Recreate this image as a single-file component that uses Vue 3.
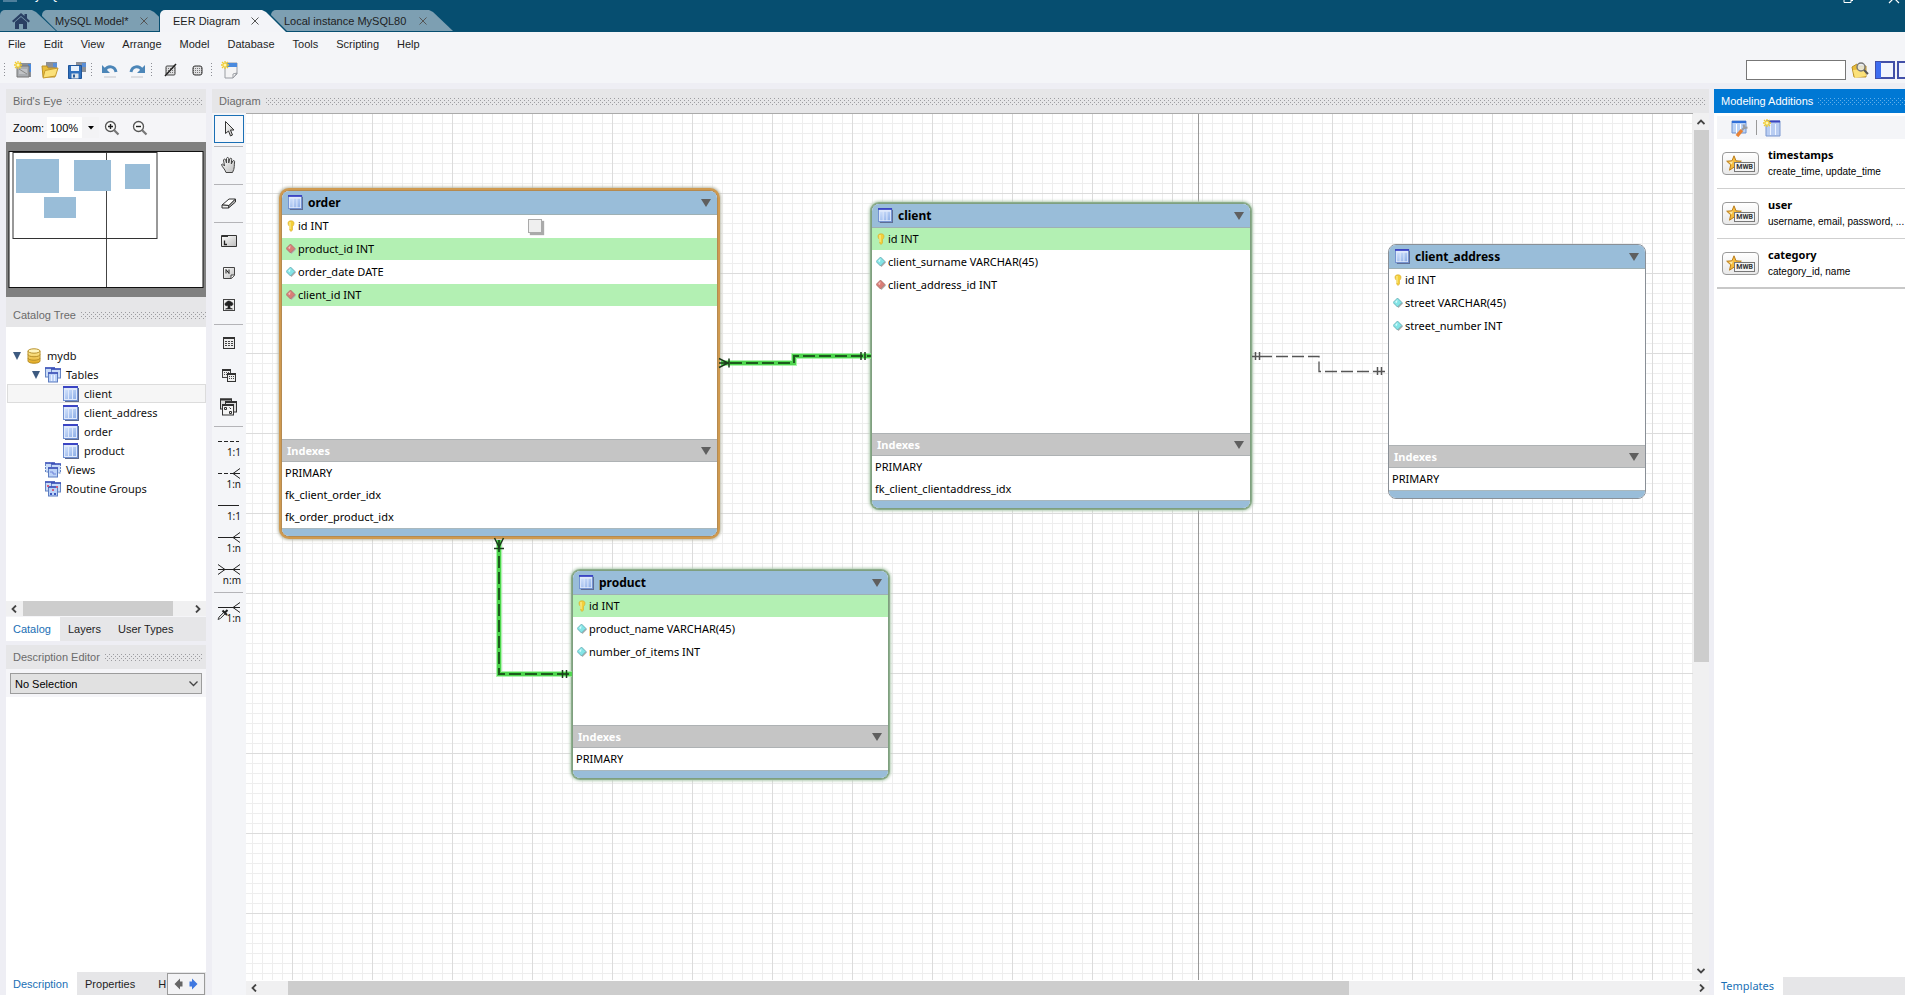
<script setup>
const menus = ['File', 'Edit', 'View', 'Arrange', 'Model', 'Database', 'Tools', 'Scripting', 'Help']

const tabs = [
  { label: 'MySQL Model*', cls: 'model' },
  { label: 'EER Diagram', cls: 'eer active' },
  { label: 'Local instance MySQL80', cls: 'local' },
]

const toolbarGroups = [
  [['new', 'New model'], ['open', 'Open model'], ['save', 'Save model']],
  [['undo', 'Undo'], ['redo', 'Redo']],
  [['nogrid', 'Toggle grid'], ['grid', 'Align to grid']],
  [['newdoc', 'New diagram']],
]

const tree = [
  { label: 'mydb', icon: 'db', level: 0, open: true },
  { label: 'Tables', icon: 'tables', level: 1, open: true },
  { label: 'client', icon: 'table', level: 2, selected: true },
  { label: 'client_address', icon: 'table', level: 2 },
  { label: 'order', icon: 'table', level: 2 },
  { label: 'product', icon: 'table', level: 2 },
  { label: 'Views', icon: 'views', level: 1 },
  { label: 'Routine Groups', icon: 'routines', level: 1 },
]

const tools = [
  [['pointer', 'Select', true]],
  [['hand', 'Pan']],
  [['eraser', 'Delete']],
  [['layer', 'Layer'], ['note', 'Note'], ['image', 'Image']],
  [['grey-table', 'Table'], ['grey-view', 'View'], ['grey-routine', 'Routine group']],
]

const relations = [
  [['rel-d11', '1:1'], ['rel-d1n', '1:n'], ['rel-11', '1:1'], ['rel-1n', '1:n'], ['rel-nm', 'n:m']],
  [['rel-pick', '1:n']],
]

const entities = [
  {
    name: 'order', x: 35, y: 76, w: 437, h: 347, state: 'selected',
    columns: [
      { text: 'id INT', icon: 'key' },
      { text: 'product_id INT', icon: 'fk', hot: true },
      { text: 'order_date DATE', icon: 'col' },
      { text: 'client_id INT', icon: 'fk', hot: true },
    ],
    indexes: ['PRIMARY', 'fk_client_order_idx', 'fk_order_product_idx'],
  },
  {
    name: 'client', x: 625, y: 89, w: 380, h: 306, state: 'related',
    columns: [
      { text: 'id INT', icon: 'key', hot: true },
      { text: 'client_surname VARCHAR(45)', icon: 'col' },
      { text: 'client_address_id INT', icon: 'fk' },
    ],
    indexes: ['PRIMARY', 'fk_client_clientaddress_idx'],
  },
  {
    name: 'client_address', x: 1142, y: 130, w: 258, h: 255, state: 'plain',
    columns: [
      { text: 'id INT', icon: 'key' },
      { text: 'street VARCHAR(45)', icon: 'col' },
      { text: 'street_number INT', icon: 'col' },
    ],
    indexes: ['PRIMARY'],
  },
  {
    name: 'product', x: 326, y: 456, w: 317, h: 209, state: 'related',
    columns: [
      { text: 'id INT', icon: 'key', hot: true },
      { text: 'product_name VARCHAR(45)', icon: 'col' },
      { text: 'number_of_items INT', icon: 'col' },
    ],
    indexes: ['PRIMARY'],
  },
]

const place = (e) => ({ left: e.x + 'px', top: e.y + 'px', width: e.w + 'px', height: e.h + 'px' })

const templates = [
  { name: 'timestamps', fields: 'create_time, update_time' },
  { name: 'user', fields: 'username, email, password, ...' },
  { name: 'category', fields: 'category_id, name' },
]
</script>

<template>
  <div class="app">
    <svg class="defs" aria-hidden="true">
      <defs>
        <linearGradient id="gTable" x1="0" y1="0" x2="1" y2="1">
          <stop offset="0" stop-color="#cfe0fb" /><stop offset="1" stop-color="#8fb0e8" />
        </linearGradient>
        <linearGradient id="gGold" x1="0" y1="0" x2="0" y2="1">
          <stop offset="0" stop-color="#fff0a0" /><stop offset="1" stop-color="#e3a81e" />
        </linearGradient>
        <linearGradient id="gGrey" x1="0" y1="0" x2="1" y2="1">
          <stop offset="0" stop-color="#fff" /><stop offset="1" stop-color="#bdbdbd" />
        </linearGradient>
      </defs>
      <symbol id="table" viewBox="0 0 16 16">
        <rect x="2" y="2" width="14" height="14" fill="#5d6b90" />
        <rect x="0.5" y="0.5" width="14" height="14" fill="#dfe9fb" stroke="#6f8fd0" />
        <rect x="0" y="0" width="15" height="2" fill="#3b45c4" />
        <path d="M2 4h3v9H2zM6 4h3v9H6zM10 4h3v9h-3z" fill="url(#gTable)" />
      </symbol>
      <symbol id="db" viewBox="0 0 16 16">
        <path d="M2 3v10c0 3 12 3 12 0V3z" fill="url(#gGold)" stroke="#b8902a" />
        <ellipse cx="8" cy="3" rx="6" ry="2.2" fill="#fff6c0" stroke="#b8902a" />
        <path d="M2 6.500c0 3 12 3 12 0M2 10c0 3 12 3 12 0" fill="none" stroke="#b8902a" />
      </symbol>
      <symbol id="tables" viewBox="0 0 16 16">
        <rect x="0.500" y="1" width="9" height="9" fill="#c9dbf8" stroke="#6484c4" />
        <rect x="6.500" y="2" width="9" height="9" fill="#c9dbf8" stroke="#6484c4" />
        <rect x="3.500" y="6" width="9" height="9" fill="#bcd2f7" stroke="#5c7cc0" />
        <path d="M0 1h10M6 2h10M3 6h10" stroke="#3b4fb8" stroke-width="1.500" />
        <path d="M6.500 8v6M9.500 8v6" stroke="#eaf2ff" />
      </symbol>
      <symbol id="views" viewBox="0 0 16 16">
        <rect x="0.500" y="1" width="9" height="9" fill="#c9dbf8" stroke="#6484c4" stroke-dasharray="2 1" />
        <rect x="6.500" y="2" width="9" height="9" fill="#c9dbf8" stroke="#6484c4" stroke-dasharray="2 1" />
        <rect x="3.500" y="6" width="9" height="9" fill="#bcd2f7" stroke="#5c7cc0" />
        <path d="M0 1h10M6 2h10M3 6h10" stroke="#3b4fb8" stroke-width="1.500" />
        <path d="M5 10h3v2h3" stroke="#6f83d8" fill="none" />
      </symbol>
      <symbol id="routines" viewBox="0 0 16 16">
        <rect x="0.500" y="1" width="9" height="9" fill="#c9dbf8" stroke="#6484c4" />
        <rect x="6.500" y="2" width="9" height="9" fill="#c9dbf8" stroke="#6484c4" />
        <rect x="3.500" y="6" width="9" height="9" fill="#bcd2f7" stroke="#5c7cc0" />
        <path d="M0 1h10M6 2h10M3 6h10" stroke="#3b4fb8" stroke-width="1.500" />
        <path d="M2 4h2v2H2zM11 5h2v2h-2zM7 8h2v2H7z" fill="#d06080" />
        <path d="M5 12h2v2H5zM9 12h2v2H9z" fill="#3a58c0" />
      </symbol>
      <symbol id="key" viewBox="0 0 10 12">
        <path d="M2 3c0-3 6-3 6 0 0 2-1 3-1.500 3.500V10L5 11.500 3.700 10V6.500C3 6 2 5 2 3z" fill="#f3cf3a" stroke="#d9a92a" stroke-width="0.600" />
        <path d="M4 2v7" stroke="#fff3a0" />
      </symbol>
      <symbol id="fk" viewBox="0 0 10 12">
        <path d="M5.500 2L10 6.500 5.500 11 1 6.500z" fill="#b0b0b0" />
        <path d="M4.500 1L9 5.500 4.500 10 0 5.500z" fill="#d97d77" stroke="#a8706c" stroke-width="0.700" />
        <path d="M4.500 2.500L2 5l2 1z" fill="#f6c4c0" />
      </symbol>
      <symbol id="col" viewBox="0 0 10 12">
        <path d="M5.500 2L10 6.500 5.500 11 1 6.500z" fill="#b0b0b0" />
        <path d="M4.500 1L9 5.500 4.500 10 0 5.500z" fill="#84e4e6" stroke="#5fa4ac" stroke-width="0.700" />
        <path d="M4.500 2.500L2 5l2 1z" fill="#d4fbfb" />
      </symbol>

      <symbol id="new" viewBox="0 0 18 18">
        <path d="M6 2h11v14H6z" fill="#8b8f96" /><path d="M14 3h3v8h-3z" fill="#4a8ade" />
        <path d="M3 5h12v11H3z" fill="#a9acb0" stroke="#777" /><path d="M5 8h8v5H5z" fill="#c0c2c5" /><path d="M5 8l8 5" stroke="#888" />
        <path d="M4 0v8M0 4h8M1 1l6 6M7 1L1 7" stroke="#f2cc2e" stroke-width="1.300" /><circle cx="4" cy="4" r="1.500" fill="#fff6b0" />
      </symbol>
      <symbol id="open" viewBox="0 0 18 18">
        <path d="M5 1h11v9H5z" fill="#8c9097" /><path d="M12 2h4v4h-4z" fill="#5b8fd6" />
        <path d="M1 5h5l1 2h7v9H2z" fill="#e9bd3a" stroke="#b8902a" /><path d="M4 9.500L17 7l-2.500 8L2 17z" fill="#fbe17a" stroke="#c79a2c" />
      </symbol>
      <symbol id="save" viewBox="0 0 18 18">
        <path d="M8 1h10v10H8z" fill="#8c9097" /><path d="M14 2h4v4h-4z" fill="#5b8fd6" />
        <path d="M0.500 4.500h13v13h-13z" fill="#2f70bd" stroke="#1f559a" /><path d="M3 5h8v5H3z" fill="#e8f1fb" /><path d="M3.500 12.500h7v5h-7z" fill="#dfe5ea" /><path d="M5 13.500h2v3H5z" fill="#2b5c97" />
      </symbol>
      <symbol id="undo" viewBox="0 0 18 18">
        <path d="M4 9c3-5 10-4 11 2" fill="none" stroke="#4c86b8" stroke-width="3" /><path d="M1 4v8h8z" fill="#4c86b8" />
        <path d="M3 16h12" stroke="#dcdde1" stroke-width="2" />
      </symbol>
      <symbol id="redo" viewBox="0 0 18 18">
        <path d="M14 9c-3-5-10-4-11 2" fill="none" stroke="#4c86b8" stroke-width="3" /><path d="M17 4v8H9z" fill="#4c86b8" />
        <path d="M3 16h12" stroke="#dcdde1" stroke-width="2" />
      </symbol>
      <symbol id="grid" viewBox="0 0 18 18">
        <rect x="5" y="5" width="9" height="9" rx="2" fill="#e0e0e2" stroke="#333" />
        <path d="M5 7.500h9M5 9.500h9M5 11.500h9" stroke="#555" stroke-dasharray="1 1" />
        <path d="M7.500 5v9M9.500 5v9M11.500 5v9" stroke="#777" stroke-dasharray="1 1" />
      </symbol>
      <symbol id="nogrid" viewBox="0 0 18 18">
        <rect x="5" y="5" width="9" height="9" rx="1" fill="#e0e0e2" stroke="#444" />
        <path d="M5 7.500h9M5 9.500h9M5 11.500h9" stroke="#777" stroke-dasharray="1 1" />
        <path d="M4 15L15 3" stroke="#222" stroke-width="1.500" />
      </symbol>
      <symbol id="newdoc" viewBox="0 0 18 18">
        <path d="M4 2h12v11l-4 4H4z" fill="#f4f4f5" stroke="#9a9da3" /><path d="M5 2h11v4H5z" fill="#4a8ade" /><path d="M16 12l-4 1v4z" fill="#fff" stroke="#9a9da3" />
        <path d="M4 0v8M0 4h8M1 1l6 6M7 1L1 7" stroke="#f2cc2e" stroke-width="1.300" /><circle cx="4" cy="4" r="1.500" fill="#fff6b0" />
      </symbol>
      <symbol id="search" viewBox="0 0 18 18">
        <path d="M1 6l5-3 2 2h7v11H3z" fill="#e9bd3a" stroke="#b8902a" /><path d="M2 9l12-1 1 7-11 2z" fill="#fbe17a" />
        <circle cx="10" cy="6" r="4" fill="#e8edf0" fill-opacity="0.800" stroke="#777" stroke-width="1.400" /><path d="M13 9l4 4" stroke="#555" stroke-width="2" />
      </symbol>
      <symbol id="pane" viewBox="0 0 20 18">
        <rect x="1" y="1" width="18" height="16" fill="#f2f5fd" stroke="#4250a8" stroke-width="2" /><path d="M1 1h5v16H1z" fill="#3f6ef0" />
      </symbol>
      <symbol id="mag-plus" viewBox="0 0 16 16">
        <circle cx="6.500" cy="6.500" r="5" fill="#fafafa" stroke="#555" stroke-width="1.300" /><path d="M10 10l4.500 4.500" stroke="#777" stroke-width="2.200" /><path d="M4 6.500h5M6.500 4v5" stroke="#222" stroke-width="1.400" />
      </symbol>
      <symbol id="mag-minus" viewBox="0 0 16 16">
        <circle cx="6.500" cy="6.500" r="5" fill="#fafafa" stroke="#555" stroke-width="1.300" /><path d="M10 10l4.500 4.500" stroke="#777" stroke-width="2.200" /><path d="M4 6.500h5" stroke="#222" stroke-width="1.400" />
      </symbol>

      <symbol id="pointer" viewBox="0 0 18 18">
        <path d="M5.500 1.500v12l3-2.500 2 5 2-1-2-5h3.500z" fill="url(#gGrey)" stroke="#333" />
      </symbol>
      <symbol id="hand" viewBox="0 0 18 18">
        <path d="M6 16.500C5 13 2 11 1.500 8.500c1-1 2 0 3 1.500L3.500 4c.5-1.500 2-1 2.200 0L6.500 7V2.500c.4-1.500 2-1.300 2.200 0V7l1-4c.5-1.300 2-1 2 .3L11.300 8l1.500-3c.8-1 2-.4 1.800.8C14 9 15 12 12.500 16.500z" fill="url(#gGrey)" stroke="#444" />
      </symbol>
      <symbol id="eraser" viewBox="0 0 18 18">
        <path d="M2 11l7-6h6.500L9 11.500z" fill="#fff" stroke="#333" /><path d="M2 11v3h6.500L9 11.500z" fill="#eee" stroke="#333" /><path d="M8.500 14l7-6V5L9 11.500z" fill="#bbb" stroke="#333" />
      </symbol>
      <symbol id="layer" viewBox="0 0 18 18">
        <path d="M1.500 3.500h15v11h-15z" fill="url(#gGrey)" stroke="#333" /><path d="M2 4.500h6" stroke="#333" /><path d="M4.500 8.500v4H7" fill="none" stroke="#222" stroke-width="1.300" />
      </symbol>
      <symbol id="note" viewBox="0 0 18 18">
        <path d="M3.500 3.500h11v8l-3 3h-8z" fill="url(#gGrey)" stroke="#444" /><path d="M14.500 11h-3.500v3.500" fill="#fff" stroke="#444" /><path d="M6 9.500v-4l3 4v-4" fill="none" stroke="#222" />
      </symbol>
      <symbol id="image" viewBox="0 0 18 18">
        <rect x="3.500" y="3.500" width="11" height="11" fill="#eee" stroke="#444" /><path d="M9 5c1.500 0 2 1 2 1 2 0 2.500 3 1 3.500-1 .4-2 0-2 0v2.500l2.500 1h-7l2.500-1V9.500s-2.500 1-3-.8C4.700 7 6.500 6 7 6c0-.5.800-1 2-1z" fill="#222" stroke="#222" stroke-width="0.600" />
      </symbol>
      <symbol id="grey-table" viewBox="0 0 18 18">
        <rect x="3.500" y="3.500" width="11" height="11" fill="#eee" stroke="#333" /><path d="M3 4h12" stroke="#333" stroke-width="2" /><path d="M5 7.500h8M5 9.500h8M5 11.500h8" stroke="#444" stroke-dasharray="2 1" />
      </symbol>
      <symbol id="grey-view" viewBox="0 0 18 18">
        <rect x="2.500" y="3.500" width="8" height="8" fill="#eee" stroke="#444" /><path d="M4 6.500h6M4 8.500h6" stroke="#555" stroke-dasharray="1 1" />
        <rect x="7.500" y="7.500" width="8" height="8" fill="#eee" stroke="#333" /><path d="M7 8h9M2 4h9" stroke="#333" stroke-width="2" /><path d="M9 10.500h6M9 12.500h6" stroke="#444" stroke-dasharray="1 1" />
      </symbol>
      <symbol id="grey-routine" viewBox="0 0 18 18">
        <rect x="0.500" y="1" width="11" height="10" fill="#ddd" stroke="#333" /><path d="M0 1.500h12" stroke="#333" stroke-width="2" />
        <rect x="5.500" y="4" width="11" height="10" fill="#ddd" stroke="#333" /><path d="M5 4h12" stroke="#333" stroke-width="2" />
        <rect x="2.500" y="7" width="11" height="10" fill="#f4f4f4" stroke="#333" /><path d="M2 7h12" stroke="#333" stroke-width="2" />
        <path d="M4.500 9.500h2v2h-2zM9.500 9.500l1.500 1.500M9.500 13.500h2v2h-2z" fill="none" stroke="#333" />
      </symbol>
      <symbol id="rel-d11" viewBox="0 0 24 12"><path d="M1 6.500h21" stroke="#222" stroke-dasharray="4 2" /></symbol>
      <symbol id="rel-11" viewBox="0 0 24 12"><path d="M1 6.500h21" stroke="#222" /></symbol>
      <symbol id="rel-d1n" viewBox="0 0 24 12"><path d="M1 6.500h16" stroke="#222" stroke-dasharray="4 2" /><path d="M23 1.500l-7 5 7 5M16 6.500h7" fill="none" stroke="#222" /></symbol>
      <symbol id="rel-1n" viewBox="0 0 24 12"><path d="M1 6.500h22M23 1.500l-7 5 7 5" fill="none" stroke="#222" /></symbol>
      <symbol id="rel-nm" viewBox="0 0 24 12"><path d="M1 6.500h22M23 1.500l-7 5 7 5M1 1.500l7 5-7 5" fill="none" stroke="#222" /></symbol>
      <symbol id="rel-pick" viewBox="0 0 24 24">
        <path d="M1 6.500h22M23 1.500l-7 5 7 5" fill="none" stroke="#222" /><path d="M1 18.500l1-2.500 5-5 1.500 1.500-5 5z" fill="#ddd" stroke="#444" /><path d="M5.500 9.500l4.500 4.500M7.500 12L10.500 9" stroke="#222" stroke-width="2" />
      </symbol>
      <symbol id="tbl-edit" viewBox="0 0 18 18">
        <path d="M1 2h14v12H1z" fill="#b9d2f6" stroke="#6f93cf" /><path d="M1 2h14v2H1z" fill="#2f6fd8" /><path d="M5.500 5v9M9.500 5v9" stroke="#fff" />
        <path d="M6 17l5-6" stroke="#ea8233" stroke-width="3.500" /><path d="M11 11l3-3M12.500 5.500l1 3.500 3-.5" stroke="#9a9da3" stroke-width="2.200" fill="none" />
      </symbol>
      <symbol id="tbl-new" viewBox="0 0 18 18">
        <path d="M3 2h14v15H3z" fill="#b9cdf2" stroke="#7b97cf" /><path d="M3 1.500h14v2H3z" fill="#3944c0" /><path d="M7.500 5v11M12.500 5v11" stroke="#eef4ff" />
        <path d="M4 0v8M0 4h8M1 1l6 6M7 1L1 7" stroke="#f2cc2e" stroke-width="1.300" /><circle cx="4" cy="4" r="1.500" fill="#fff6b0" />
      </symbol>
      <symbol id="star" viewBox="0 0 16 16">
        <path d="M8 0.800l2 5 5.300.4-4 3.600 1.200 5.400L8 12.200l-4.500 3 1.200-5.400-4-3.600L6 5.800z" fill="#f7bd3e" stroke="#b97d1c" /><path d="M8 2.500l-1.500 4L3 7l2.800 2.500z" fill="#fde9a8" />
      </symbol>
    </svg>

    <header class="titlebar">
      <div class="title-row">
        <span class="app-icon"></span>
        <span class="app-title">MySQL Workbench</span>
        <svg class="win-ctl" width="62" height="4" viewBox="0 0 62 4" aria-hidden="true">
          <path d="M1 0v2.500h7V0M8 0.500h2" fill="none" stroke="#fff" />
          <path d="M46 3l5-5 5 5" fill="none" stroke="#fff" stroke-width="1.200" />
        </svg>
      </div>
      <nav class="tabs" aria-label="Documents">
        <button class="tab home" aria-label="Home">
          <svg width="18" height="16" viewBox="0 0 18 16"><path d="M9 0L0 8l1.500 1.500L9 3l7.500 6.500L18 8l-3-2.700V1h-2.500v2z" fill="#2a3f63" /><path d="M3 9l6-5 6 5v7h-4v-5H7v5H3z" fill="#2a3f63" /></svg>
        </button>
        <button v-for="t in tabs" :key="t.label" class="tab" :class="t.cls">
          <span>{{ t.label }}</span>
          <svg width="8" height="8" viewBox="0 0 8 8" aria-hidden="true"><path d="M.5.5l7 7M7.500.5l-7 7" stroke="#555" /></svg>
        </button>
      </nav>
    </header>

    <nav class="menubar" aria-label="Main menu">
      <button v-for="m in menus" :key="m">{{ m }}</button>
    </nav>

    <div class="toolbar">
      <template v-for="(g, i) in toolbarGroups" :key="i">
        <i class="grip"></i>
        <button v-for="b in g" :key="b[0]" class="tb" :aria-label="b[1]"><svg width="18" height="18"><use :href="'#' + b[0]" /></svg></button>
      </template>
      <input class="search" type="text" aria-label="Search" />
      <button class="find" aria-label="Find"><svg width="18" height="18"><use href="#search" /></svg></button>
      <button class="pane" aria-label="Left pane"><svg width="20" height="18"><use href="#pane" /></svg></button>
      <button class="pane cut" aria-label="Bottom pane"><svg width="20" height="18" viewBox="0 0 20 18"><rect x="1" y="1" width="18" height="16" fill="#f2f5fd" stroke="#4250a8" stroke-width="2" /></svg></button>
    </div>

    <main class="work">
      <aside class="left">
        <h2 class="ph">Bird's Eye<i></i></h2>
        <div class="zoom">
          <label for="zoom">Zoom:</label>
          <span class="zoombox"><input id="zoom" type="text" value="100%" /><button aria-label="Zoom levels"><svg width="6" height="4" viewBox="0 0 6 4"><path d="M0 0h6L3 3.500z" fill="#000" /></svg></button></span>
          <button aria-label="Zoom in"><svg width="16" height="16"><use href="#mag-plus" /></svg></button>
          <button aria-label="Zoom out"><svg width="16" height="16"><use href="#mag-minus" /></svg></button>
        </div>
        <svg class="bird" viewBox="0 0 200 155" preserveAspectRatio="none" role="img" aria-label="Diagram overview">
          <rect x="0" y="0" width="200" height="155" fill="#808080" />
          <rect x="3" y="9.500" width="194" height="136" fill="#fff" stroke="#111" />
          <path d="M100.500 10v135" stroke="#444" />
          <g fill="#99bdd8"><rect x="10" y="17" width="43" height="34" /><rect x="68" y="18" width="37" height="31" /><rect x="119" y="22" width="25" height="25" /><rect x="38" y="55" width="32" height="21" /></g>
          <rect x="7" y="10.500" width="144" height="86" fill="none" stroke="#333" />
        </svg>
        <h2 class="ph tall">Catalog Tree<i></i></h2>
        <ul class="tree">
          <li v-for="n in tree" :key="n.label" :class="['lv' + n.level, { sel: n.selected }]">
            <svg v-if="n.level < 2" class="twist" width="8" height="8" viewBox="0 0 8 8"><path v-if="n.open" d="M0 0h8L4 8z" fill="#3d5a80" /></svg>
            <svg width="16" height="16"><use :href="'#' + n.icon" /></svg>
            <span>{{ n.label }}</span>
          </li>
        </ul>
        <div class="hscroll small">
          <svg width="6" height="8" viewBox="0 0 6 8"><path d="M5 .5L1.500 4 5 7.500" fill="none" stroke="#444" stroke-width="1.800" /></svg>
          <b></b>
          <svg width="6" height="8" viewBox="0 0 6 8"><path d="M1 .5L4.500 4 1 7.500" fill="none" stroke="#444" stroke-width="1.800" /></svg>
        </div>
        <div class="ptabs"><button class="on">Catalog</button><button>Layers</button><button>User Types</button></div>
        <h2 class="ph gap">Description Editor<i></i></h2>
        <div class="selrow">
          <select aria-label="Object"><option>No Selection</option></select>
          <svg width="9" height="6" viewBox="0 0 9 6" aria-hidden="true"><path d="M.5.5l4 4 4-4" fill="none" stroke="#444" stroke-width="1.300" /></svg>
        </div>
        <div class="desc"></div>
        <div class="ptabs bottom">
          <button class="on">Description</button><button>Properties</button><button class="hist" aria-label="History">H</button>
          <span class="nav">
            <button aria-label="Previous"><svg width="9" height="12" viewBox="0 0 9 12"><path d="M6 .5L.5 6 6 11.500V8.500h2.500v-5H6z" fill="#666" /></svg></button>
            <button aria-label="Next"><svg width="9" height="12" viewBox="0 0 9 12"><path d="M3 .5L8.500 6 3 11.500V8.500H.5v-5H3z" fill="#3f78e0" /></svg></button>
          </span>
        </div>
      </aside>

      <section class="center">
        <h2 class="ph">Diagram<i></i></h2>
        <div class="stage">
          <div class="palette">
            <template v-for="(g, i) in tools" :key="i">
              <button v-for="t in g" :key="t[0]" class="tool" :class="{ on: t[2] }" :aria-label="t[1]"><svg width="18" height="18"><use :href="'#' + t[0]" /></svg></button>
              <hr />
            </template>
            <template v-for="(g, i) in relations" :key="'r' + i">
              <button v-for="t in g" :key="t[0]" class="tool rel" :class="{ pick: t[0] === 'rel-pick' }"><svg width="24" :height="t[0] === 'rel-pick' ? 24 : 12"><use :href="'#' + t[0]" /></svg><span>{{ t[1] }}</span></button>
              <hr v-if="i === 0" />
            </template>
          </div>

          <div class="canvas">
            <div class="pageline"></div>
            <article v-for="e in entities" :key="e.name" class="entity" :class="e.state" :style="place(e)">
              <h3><svg width="15" height="15"><use href="#table" /></svg>{{ e.name }}<i class="tri"></i></h3>
              <ul class="cols">
                <li v-for="c in e.columns" :key="c.text" :class="{ hot: c.hot }"><svg width="10" height="12"><use :href="'#' + c.icon" /></svg>{{ c.text }}</li>
              </ul>
              <h4>Indexes<i class="tri"></i></h4>
              <ul class="idx"><li v-for="x in e.indexes" :key="x">{{ x }}</li></ul>
              <footer></footer>
            </article>
            <svg class="links" width="1447" height="865" aria-hidden="true">
              <g fill="none" stroke="#8df08d" stroke-width="6" opacity="0.700"><path d="M475 249H548V242H625" /><path d="M253 426V560H326" /></g>
              <g fill="none" stroke="#4fd64f" stroke-width="4"><path d="M475 249H548V242H625" /><path d="M253 426V560H326" /></g>
              <g fill="none" stroke="#1d5c1d" stroke-width="2"><path d="M484 249H548V242H625M253 426V560H326" stroke-dasharray="12 4" /></g>
              <g fill="none" stroke="#1d3c1d" stroke-width="1.500">
                <path d="M473 244.500l9 4.500-9 4.500M483 244.500v9M473 249h10" />
                <path d="M615 238v8M619 238v8" />
                <path d="M248.500 424l4.500 9 4.500-9M248 434.500h10" />
                <path d="M316.500 556v8M320.500 556v8" />
              </g>
              <g fill="none" stroke="#555">
                <path d="M1006 242.500h20M1009.500 238v8M1013.500 238v8M1127 257.500h12M1131.500 253v8M1135.500 253v8" stroke-width="1.500" />
                <path d="M1030 242.500H1073V257.500H1127" stroke-dasharray="12 4" stroke-width="1.300" />
              </g>
            </svg>
            <div class="ghost"></div>
          </div>

          <div class="vscroll">
            <svg width="8" height="6" viewBox="0 0 8 6"><path d="M.5 5L4 1.500 7.500 5" fill="none" stroke="#444" stroke-width="1.800" /></svg>
            <b></b>
            <svg width="8" height="6" viewBox="0 0 8 6"><path d="M.5 1L4 4.500 7.500 1" fill="none" stroke="#444" stroke-width="1.800" /></svg>
          </div>
          <div class="hscroll wide">
            <svg width="6" height="8" viewBox="0 0 6 8"><path d="M5 .5L1.500 4 5 7.500" fill="none" stroke="#444" stroke-width="1.800" /></svg>
            <b></b>
            <svg width="6" height="8" viewBox="0 0 6 8"><path d="M1 .5L4.500 4 1 7.500" fill="none" stroke="#444" stroke-width="1.800" /></svg>
          </div>
        </div>
      </section>

      <aside class="right">
        <h2 class="ph blue">Modeling Additions<i></i></h2>
        <div class="addbar">
          <button aria-label="Edit template"><svg width="18" height="18"><use href="#tbl-edit" /></svg></button>
          <i></i>
          <button aria-label="New table from template"><svg width="18" height="18"><use href="#tbl-new" /></svg></button>
        </div>
        <ul class="templates">
          <li v-for="t in templates" :key="t.name">
            <span class="badge"><svg width="16" height="16"><use href="#star" /></svg><b>MWB</b></span>
            <div><strong>{{ t.name }}</strong><small>{{ t.fields }}</small></div>
          </li>
        </ul>
        <div class="ptabs rt"><button class="on">Templates</button></div>
      </aside>
    </main>
  </div>
</template>

<style>
html, body { margin: 0; background: #eeeef4; }
</style>

<style scoped>
.app { height: 100vh; display: flex; flex-direction: column; overflow: hidden; font: 11px/14px "Liberation Sans", Arial, sans-serif; color: #1e1e1e; background: #eeeef4; }
.app * { box-sizing: border-box; }
.defs { position: absolute; width: 0; height: 0; }
button { border: 0; padding: 0; margin: 0; background: none; font: inherit; color: inherit; }
input, select { font: inherit; color: inherit; margin: 0; border-radius: 0; }
h2, h3, h4, ul { margin: 0; padding: 0; list-style: none; font-weight: normal; }
svg { display: block; flex: none; }

.titlebar { background: #064e70; height: 32px; flex: none; overflow: hidden; }
.title-row { height: 2px; display: flex; align-items: flex-end; gap: 8px; padding-left: 3px; color: #fff; }
.app-icon { width: 14px; height: 2px; background: #4e7f9c; }
.app-title { font-size: 12px; line-height: 14px; }
.win-ctl { margin-left: auto; align-self: flex-start; }
.tabs { display: flex; margin-top: 8px; height: 22px; }
.tab { position: relative; z-index: 1; display: flex; align-items: center; height: 22px; padding: 0 0 0 13px; text-align: left; white-space: nowrap; }
.tab::before, .tab::after { content: ""; position: absolute; inset: 0; z-index: -1; border-radius: 5px 0 0 0; clip-path: polygon(0 0, calc(100% - 24px) 0, calc(100% - 20px) 2px, 100% 100%, 0 100%); }
.tab::before { right: -2px; left: -1px; background: #064e70; }
.tab::after { bottom: 1px; background: #7d9fb2; }
.tab span { flex: 1; }
.tab.home { width: 56px; z-index: 3; padding-left: 12px; }
.tab.model { width: 132px; margin-left: -14px; }
.tab.model svg { margin-right: 26px; }
.tab.eer { width: 126px; margin-left: -14px; z-index: 5; }
.tab.eer svg { margin-right: 27px; }
.tab.local { width: 182px; margin-left: -15px; z-index: 2; }
.tab.local svg { margin-right: 26px; }
.tab.active::after { background: #f3f4f8; bottom: 0; }

.menubar { display: flex; gap: 18px; padding: 0 8px; height: 24px; align-items: center; background: #f4f5f8; flex: none; }
.toolbar { display: flex; align-items: center; height: 27px; padding-left: 3px; background: #f4f5f8; flex: none; overflow: hidden; }
.grip { width: 6px; height: 13px; flex: none; background: repeating-linear-gradient(#8d8f96 0 1px, transparent 1px 3px) 1px 0 / 1px 100% no-repeat; }
.tb { width: 27px; display: flex; justify-content: center; }
.search { margin-left: auto; width: 100px; height: 20px; border: 1px solid #777; background: #fff; padding: 0 3px; }
.find { margin: 0 6px 0 5px; }
.pane { margin-right: 2px; }
.pane.cut { width: 8px; overflow: hidden; margin: 0; }

.work { flex: 1; min-height: 0; display: grid; grid-template-columns: 200px minmax(0, 1fr) 191px; grid-template-rows: minmax(0, 1fr); padding: 6px 0 0 6px; }
.left { display: flex; flex-direction: column; background: #f5f5f8; min-height: 0; }
.center { display: flex; flex-direction: column; margin: 0 5px 0 6px; min-width: 0; min-height: 0; }
.right { display: flex; flex-direction: column; background: #fff; min-width: 0; min-height: 0; }

.ph { --dot: #9c9ca0; display: flex; align-items: center; height: 24px; padding: 0 4px 0 7px; font-size: 11px; color: #6b6b6b; background: #e6e6e8; flex: none; white-space: nowrap; }
.ph i { flex: 1; height: 7px; margin-left: 5px; background-image: conic-gradient(at 1px 1px, transparent 75%, var(--dot) 0), conic-gradient(at 1px 1px, transparent 75%, var(--dot) 0); background-size: 4px 4px; background-position: 0 0, 2px 2px; }
.ph.tall { height: 30px; padding-top: 6px; padding-right: 0; }
.ph.gap { border-top: 4px solid #eeeef4; height: 28px; }
.ph.blue { --dot: #62aee8; background: #0078d4; color: #fff; padding-right: 0; }

.zoom { display: flex; align-items: center; height: 29px; padding-left: 7px; flex: none; color: #000; }
.zoom label { width: 34px; }
.zoombox { display: flex; width: 52px; height: 21px; background: #fff; margin-right: 5px; }
.zoombox input { width: 35px; border: 0; padding: 0 0 0 3px; background: #fff; }
.zoombox button { flex: 1; background: #f3f3f5; display: flex; align-items: center; justify-content: center; }
.zoom > button { width: 28px; }
.bird { height: 155px; width: 100%; background: #808080; flex: none; }

.tree { flex: none; height: 274px; padding: 19px 0 0 1px; background: #fff; font: 11px/17px "Noto Sans", sans-serif; color: #111; }
.tree li { display: flex; align-items: center; height: 19px; gap: 5px; padding-left: 5px; border: 1px solid transparent; }
.tree .lv1 { padding-left: 24px; }
.tree .lv2 { padding-left: 55px; }
.tree .sel { background: #f6f6f6; border-color: #dcdcdc; }

.hscroll { display: flex; align-items: center; background: #f0f0f1; flex: none; }
.hscroll.small { height: 15px; padding: 0 5px; justify-content: space-between; }
.hscroll.small b { height: 15px; width: 150px; margin-right: auto; margin-left: 6px; background: #cdcdcd; }

.ptabs { display: flex; height: 24px; background: #e6e6e8; flex: none; margin-top: 1px; white-space: nowrap; }
.ptabs button { padding: 0 9px 0 8px; }
.ptabs button.on { background: #fff; color: #1a6fb5; }
.left .ptabs button:first-child { padding-left: 7px; }
.ptabs.bottom { position: relative; height: 23px; overflow: hidden; margin: 0; }
.ptabs.bottom button { padding: 0 9px 0 8px; }
.ptabs.bottom .hist { padding: 0 0 0 14px; }
.ptabs .nav { position: absolute; right: 1px; top: 1px; width: 38px; height: 22px; border: 1px solid #9a9a9a; background: #f3f3f5; display: flex; align-items: center; justify-content: space-evenly; }
.ptabs.bottom .nav button { padding: 0; }

.selrow { position: relative; padding: 4px; height: 28px; flex: none; }
.selrow select { width: 100%; height: 21px; appearance: none; border: 1px solid #9c9c9c; background: #e1e1e1; padding: 0 4px; color: #000; }
.selrow svg { position: absolute; right: 8px; top: 12px; }
.desc { flex: 1; background: #fff; }

.stage { flex: 1; min-height: 0; display: grid; grid-template-columns: 34px minmax(0, 1fr) 16px; grid-template-rows: minmax(0, 1fr) 15px; background: #f4f5f8; }
.palette { grid-row: 1 / 3; padding: 0 3px 0 2px; min-height: 0; overflow: hidden; }
.tool { display: flex; align-items: center; justify-content: center; width: 30px; height: 32px; }
.tool.on { height: 28px; margin: 2px 0 3px; border: 1px solid #1a6fb5; background: #f7f8fb; }
.palette hr { border: 0; height: 1px; margin: 3px 0 2px; background: #b4b4b8; }
.tool.rel { flex-direction: column; justify-content: flex-start; align-items: flex-end; padding: 6px 3px 0 0; font: 10px/10px "Noto Sans", sans-serif; color: #111; }
.tool.pick svg { margin-bottom: -12px; }

.canvas { position: relative; overflow: hidden; border-top: 1px solid #aaa; background-color: #fff;
  background-image: linear-gradient(90deg, #dcdcdc 1px, transparent 1px), linear-gradient(#dcdcdc 1px, transparent 1px), linear-gradient(90deg, #eee 1px, transparent 1px), linear-gradient(#eee 1px, transparent 1px);
  background-size: 80px 80px, 80px 80px, 10px 10px, 10px 10px; background-position: 46px 79px, 46px 79px, 6px 9px, 6px 9px; }
.pageline { position: absolute; left: 952px; top: 0; bottom: 0; width: 1px; background: #999; }
.links { position: absolute; left: 0; top: 0; }
.ghost { position: absolute; left: 282px; top: 105px; width: 14px; height: 14px; background: #efefef; border: 1px solid #aaa; box-shadow: 2px 2px 1px #aaa; }

.entity { position: absolute; display: flex; flex-direction: column; border: 1px solid #8a9097; border-radius: 8px; background: #fff; overflow: hidden; font: 11px/22px "Noto Sans", sans-serif; color: #000; }
.entity.selected { border-color: #b58a50; box-shadow: 0 0 0 2px #cf9a50, 0 0 3px 3px #b9b9a8; }
.entity.related { border-color: #7f9f7f; box-shadow: 0 0 0 1px #8cae8c, 0 0 3px 2px #b4ccb4; }
.entity h3 { display: flex; align-items: center; height: 24px; flex: none; padding: 0 6px; gap: 5px; background: #99bdd9; border-bottom: 1px solid #9eb0b4; font-size: 12px; font-weight: bold; }
.entity .tri { margin-left: auto; border: 5px solid transparent; border-top: 8px solid #5f5f5f; border-bottom: 0; }
.cols { flex: 1; }
.cols li { display: flex; align-items: center; height: 22px; margin-bottom: 1px; padding-left: 4px; gap: 2px; }
.cols li.hot { background: #b3f0b3; }
.entity h4 { display: flex; align-items: center; height: 23px; flex: none; padding: 0 6px 0 5px; background: #c5c5c5; border: 1px solid #aeb2b4; border-width: 1px 0; color: #fff; font-size: 11px; font-weight: bold; }
.idx li { height: 22px; padding-left: 3px; }
.entity footer { height: 8px; flex: none; background: #99bdd9; border-top: 1px solid #a9b8be; }

.vscroll { grid-column: 3; grid-row: 1; display: flex; flex-direction: column; align-items: center; background: #f0f0f1; padding: 6px 0; }
.vscroll b { width: 15px; height: 532px; margin: 5px 0 auto; background: #cdcdcd; }
.hscroll.wide { grid-column: 2 / 4; grid-row: 2; padding: 0 4px 0 5px; border-top: 1px solid #fff; }
.hscroll.wide b { flex: 0 1 73%; height: 15px; margin: 0 auto 0 31px; background: #cdcdcd; }

.addbar { display: flex; align-items: center; height: 23px; margin: 3px 0 0 3px; padding-left: 14px; background: #f4f5f8; flex: none; }
.addbar i { width: 1px; height: 15px; margin: 0 6px 0 7px; background: #999; }
.templates { flex: 1; margin-left: 3px; }
.templates li { display: flex; align-items: center; height: 50px; border-bottom: 1px solid #cfcfcf; padding-left: 5px; gap: 9px; white-space: nowrap; color: #000; }
.templates li:last-child { border-bottom: 2px solid #c8c8c8; }
.badge { position: relative; width: 37px; height: 23px; border: 1px solid #999; border-radius: 4px; background: linear-gradient(#fff, #e9e9e9); padding: 2px 3px; flex: none; }
.badge b { position: absolute; right: 3px; bottom: 2px; font: bold 7px/8px Roboto, sans-serif; color: #333; border: 1px solid #777; background: #f4f4f4; padding: 0 1px; }
.templates strong { display: block; margin-bottom: 1px; font: bold 11px/16px "Noto Sans", sans-serif; }
.templates small { display: block; font-size: 10px; line-height: 16px; }
.ptabs.rt { height: 18px; margin: 0; font-family: "Noto Sans", sans-serif; }
.ptabs.rt button { padding: 0 9px 0 7px; }
</style>
